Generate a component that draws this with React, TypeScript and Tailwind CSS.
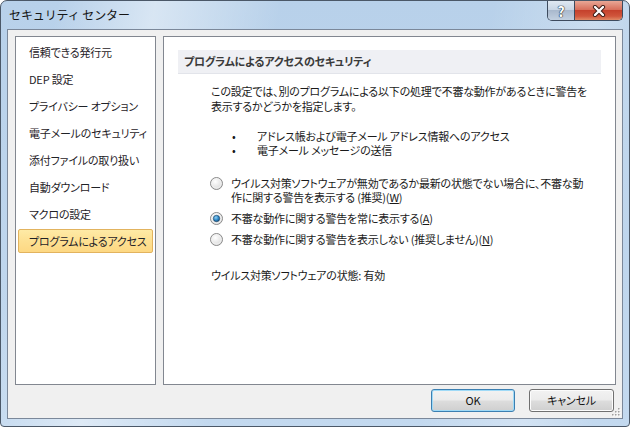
import React from 'react'

const font = "[font-family:'Noto_Sans_CJK_JP',sans-serif] [font-feature-settings:'palt'] tracking-[-0.2px]"

const navItems = [
  '信頼できる発行元',
  'DEP 設定',
  'プライバシー オプション',
  '電子メールのセキュリティ',
  '添付ファイルの取り扱い',
  '自動ダウンロード',
  'マクロの設定',
  'プログラムによるアクセス',
]

function Radio({ checked, id }: { checked?: boolean; id: string }) {
  return (
    <svg width="13" height="13" viewBox="0 0 13 13" className="shrink-0 mt-[1px]">
      <defs>
        <radialGradient id={`rb-${id}`} cx="0.4" cy="0.35" r="0.7">
          <stop offset="0%" stopColor="#ffffff" />
          <stop offset="100%" stopColor="#d8d8d8" />
        </radialGradient>
        <radialGradient id={`rd-${id}`} cx="0.4" cy="0.35" r="0.7">
          <stop offset="0%" stopColor="#8fd0f5" />
          <stop offset="60%" stopColor="#2a84c4" />
          <stop offset="100%" stopColor="#19507e" />
        </radialGradient>
      </defs>
      <circle cx="6.5" cy="6.5" r="6" fill={`url(#rb-${id})`} stroke="#8a8a8a" strokeWidth="1" />
      <circle cx="6.5" cy="6.5" r="4.6" fill="none" stroke="#f4f4f4" strokeWidth="0.8" />
      {checked && <circle cx="6.5" cy="6.5" r="3.2" fill={`url(#rd-${id})`} stroke="#1b3f60" strokeWidth="0.6" />}
    </svg>
  )
}

export default function App() {
  return (
    <div className={`${font} w-[630px] h-[427px] relative flex flex-col rounded-t-[7px] rounded-b-[4px] border border-[#4b5868] bg-[linear-gradient(100deg,rgba(255,255,255,0)_8%,rgba(255,255,255,0.45)_22%,rgba(255,255,255,0)_40%,rgba(255,255,255,0)_70%,rgba(255,255,255,0.25)_85%,rgba(255,255,255,0)_95%),linear-gradient(180deg,#b8d1ea_0%,#c3d9ef_100%)] px-[6px] pb-[7px] overflow-hidden`}>
      {/* title bar */}
      <div className="h-[28px] shrink-0 flex items-center pl-[2px] text-[12px] text-[#141414] leading-none [font-feature-settings:normal] tracking-[-0.1px]">
        セキュリティ センター
      </div>

      {/* caption buttons */}
      <div className="absolute top-0 right-[6px] h-[20px] flex border border-t-0 border-[#3d4b5e] rounded-b-[5px] overflow-hidden">
        <div className="w-[27px] h-full flex items-center justify-center border-r border-[#3d4b5e] bg-[linear-gradient(180deg,#dfe8f2_0%,#c9d6e5_45%,#a9b9cd_50%,#c2d0e0_100%)]">
          <span className="text-[14px] font-bold text-white leading-none [text-shadow:0_0_1px_#1f2a38,0_0_1px_#1f2a38,0_0_1px_#1f2a38]">?</span>
        </div>
        <div className="w-[47px] h-full flex items-center justify-center bg-[linear-gradient(180deg,#e9a796_0%,#d8705c_45%,#c5412c_50%,#d0563c_80%,#e08a66_100%)]">
          <svg width="14" height="12" viewBox="0 0 14 12">
            <path d="M3 2 L11 10 M11 2 L3 10" stroke="#3a1a14" strokeWidth="4.2" strokeLinecap="round" />
            <path d="M3 2 L11 10 M11 2 L3 10" stroke="#ffffff" strokeWidth="2.4" strokeLinecap="round" />
          </svg>
        </div>
      </div>

      {/* client area */}
      <div className="flex-1 relative flex flex-col border border-[#7b889a] bg-[#f0f0f0] pt-[6px] pl-[7px] pr-[6px] pb-[6px]">
        <div className="flex gap-[7px] h-[349px]">
          {/* left nav */}
          <div className="w-[141px] border border-[#828790] bg-white pt-[3px] px-[2px] flex flex-col gap-[3px]">
            {navItems.map((item, i) => (
              <div
                key={item}
                className={`h-[24px] shrink-0 flex items-center pl-[10px] rounded-[2px] border text-[11px] leading-none text-[#1f2227] whitespace-nowrap ${
                  i === 7
                    ? 'border-[#e2b35e] bg-[linear-gradient(180deg,#feeaa6_0%,#fde092_50%,#fdd883_100%)]'
                    : 'border-transparent'
                }`}
              >
                {item}
              </div>
            ))}
          </div>

          {/* right content */}
          <div className="w-[453px] border border-[#828790] bg-white pt-[13px] px-[14px]">
            <div className="h-[24px] bg-[#eff0f4] border-b border-[#e2e4ea] flex items-center pl-[6px] text-[11px] font-bold text-[#3a3a3a] leading-none">
              プログラムによるアクセスのセキュリティ
            </div>

            <div className="pl-[33px] text-[11px] text-[#1a1a1a] whitespace-nowrap">
              <div className="mt-[10px] leading-[15px]">
                <div>この設定では、別のプログラムによる以下の処理で不審な動作があるときに警告を</div>
                <div>表示するかどうかを指定します。</div>
              </div>

              <div className="mt-[15px] leading-[14px]">
                <div className="flex">
                  <span className="w-[46px] pl-[21px]">•</span>
                  <span>アドレス帳および電子メール アドレス情報へのアクセス</span>
                </div>
                <div className="flex">
                  <span className="w-[46px] pl-[21px]">•</span>
                  <span>電子メール メッセージの送信</span>
                </div>
              </div>

              <div className="mt-[19px] flex flex-col gap-[7px] leading-[14px] ml-[-1px]">
                <div className="flex items-start gap-[8px]">
                  <Radio id="a" />
                  <div>
                    <div>ウイルス対策ソフトウェアが無効であるか最新の状態でない場合に、不審な動</div>
                    <div>
                      作に関する警告を表示する (推奨)(<span className="underline">W</span>)
                    </div>
                  </div>
                </div>
                <div className="flex items-start gap-[8px]">
                  <Radio id="b" checked />
                  <div>
                    不審な動作に関する警告を常に表示する(<span className="underline">A</span>)
                  </div>
                </div>
                <div className="flex items-start gap-[8px]">
                  <Radio id="c" />
                  <div>
                    不審な動作に関する警告を表示しない (推奨しません)(<span className="underline">N</span>)
                  </div>
                </div>
              </div>

              <div className="mt-[22px] leading-[14px]">ウイルス対策ソフトウェアの状態: 有効</div>
            </div>
          </div>
        </div>

        {/* buttons */}
        <div className="mt-[4px] h-[23px] flex justify-end gap-[14px] pr-[2px]">
          <button className="w-[84px] h-[23px] rounded-[3px] border border-[#3c7fb1] shadow-[inset_0_0_0_1px_#9fdaf7] bg-[linear-gradient(180deg,#f2f2f2_0%,#ebebeb_48%,#dddddd_52%,#cfcfcf_100%)] text-[11px] text-[#111] leading-none">
            OK
          </button>
          <button className="w-[85px] h-[23px] rounded-[3px] border border-[#707070] shadow-[inset_0_0_0_1px_#fcfcfc] bg-[linear-gradient(180deg,#f2f2f2_0%,#ebebeb_48%,#dddddd_52%,#cfcfcf_100%)] text-[11px] text-[#111] leading-none">
            キャンセル
          </button>
        </div>

        {/* size grip */}
        <svg width="10" height="10" viewBox="0 0 10 10" className="absolute right-[1px] bottom-[1px]">
          {[
            [7, 1],
            [4, 4],
            [7, 4],
            [1, 7],
            [4, 7],
            [7, 7],
          ].map(([x, y]) => (
            <g key={`${x}-${y}`}>
              <rect x={x + 1} y={y + 1} width="1.5" height="1.5" fill="#ffffff" />
              <rect x={x} y={y} width="1.5" height="1.5" fill="#a0a0a0" />
            </g>
          ))}
        </svg>
      </div>
    </div>
  )
}
